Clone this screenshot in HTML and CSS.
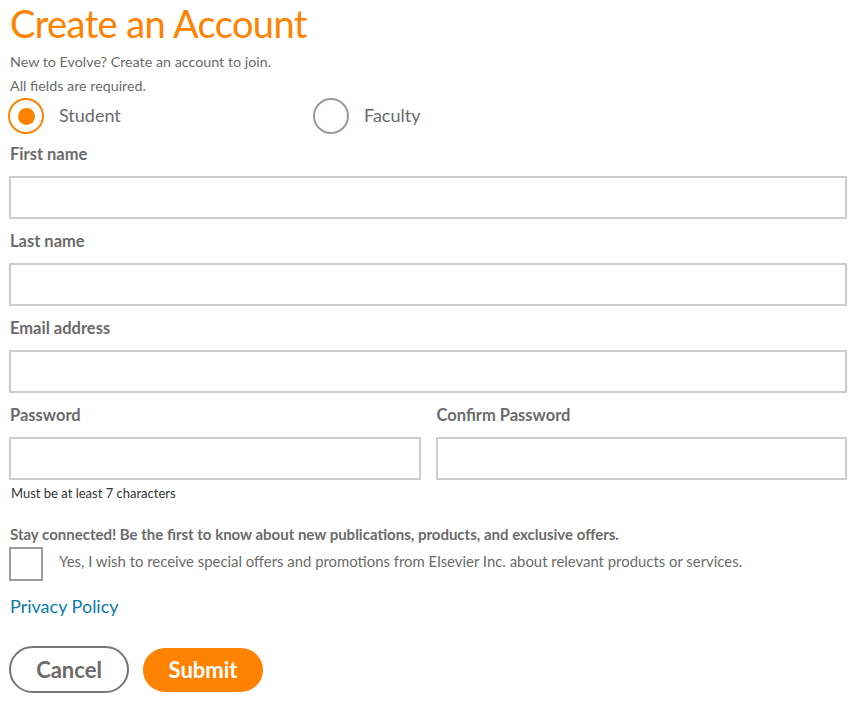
FILE: index.html
```html
<!DOCTYPE html>
<html lang="en">
<head>
<meta charset="utf-8">
<title>Create an Account</title>
<link rel="stylesheet" href="styles.css">
</head>
<body>
<main class="page">
  <h1 class="title">Create an Account</h1>
  <p class="intro">New to Evolve? Create an account to join.</p>
  <p class="intro">All fields are required.</p>
  <div class="roles">
    <label class="radio">
      <span class="radio-ring checked"><span class="radio-dot"></span></span>
      <span class="radio-text">Student</span>
    </label>
    <label class="radio">
      <span class="radio-ring"></span>
      <span class="radio-text">Faculty</span>
    </label>
  </div>
  <div class="field">
    <div class="label">First name</div>
    <div class="input"></div>
  </div>
  <div class="field">
    <div class="label">Last name</div>
    <div class="input"></div>
  </div>
  <div class="field">
    <div class="label">Email address</div>
    <div class="input"></div>
  </div>
  <div class="pw-row">
    <div class="field">
      <div class="label">Password</div>
      <div class="input"></div>
      <div class="hint">Must be at least 7 characters</div>
    </div>
    <div class="field">
      <div class="label">Confirm Password</div>
      <div class="input"></div>
    </div>
  </div>
  <p class="stay">Stay connected! Be the first to know about new publications, products, and exclusive offers.</p>
  <label class="check">
    <span class="box"></span>
    <span class="check-text">Yes, I wish to receive special offers and promotions from Elsevier Inc. about relevant products or services.</span>
  </label>
  <a class="privacy" href="#">Privacy Policy</a>
  <div class="actions">
    <button class="btn btn-cancel" type="button">Cancel</button>
    <button class="btn btn-submit" type="button">Submit</button>
  </div>
</main>
</body>
</html>
```

FILE: styles.css
```css
html, body {
  margin: 0;
  padding: 0;
  background: #ffffff;
}
body {
  font-family: Lato, "Open Sans", "Liberation Sans", sans-serif;
  color: #6b6b6b;
}
.page {
  padding: 0 8px 0 9px;
}
.title {
  margin: 0;
  font-size: 38px;
  font-weight: 400;
  letter-spacing: -0.6px;
  line-height: 46px;
  height: 50px;
  color: #ff8200;
  padding-left: 1px;
}
.intro {
  margin: 0;
  font-size: 14.3px;
  line-height: 24px;
  padding-left: 1px;
}
.roles {
  display: grid;
  grid-template-columns: 305px auto;
  margin-top: 0;
  height: 36px;
}
.radio {
  display: flex;
  align-items: center;
  gap: 15px;
}
.radio-ring {
  box-sizing: border-box;
  width: 36px;
  height: 36px;
  border-radius: 50%;
  border: 2px solid #9b9b9b;
  display: flex;
  align-items: center;
  justify-content: center;
  margin-left: -1px;
}
.radio-ring.checked {
  border-color: #ff8200;
}
.radio-dot {
  width: 17px;
  height: 17px;
  border-radius: 50%;
  background: #ff8200;
}
.radio-text {
  font-size: 18px;
  line-height: 22px;
  margin-top: -3px;
}
.field {
  display: flex;
  flex-direction: column;
}
.roles + .field {
  margin-top: 9px;
}
.field + .field,
.field + .pw-row {
  margin-top: 11px;
}
.label {
  font-size: 16.5px;
  font-weight: 700;
  line-height: 22px;
  height: 22px;
  margin-bottom: 11px;
  color: #6b6b6b;
  padding-left: 1px;
}
.input {
  box-sizing: border-box;
  height: 43px;
  border: 2px solid #cdcdcd;
  background: #fff;
}
.pw-row {
  display: grid;
  grid-template-columns: 1fr 1fr;
  gap: 15px;
}
.pw-row .field + .field {
  margin-top: 0;
}
.hint {
  margin-top: 5px;
  font-size: 13px;
  line-height: 16px;
  color: #333333;
  padding-left: 2px;
}
.stay {
  margin: 23px 0 0;
  font-size: 15px;
  font-weight: 700;
  line-height: 20px;
  padding-left: 1px;
}
.check {
  display: flex;
  align-items: center;
  gap: 16px;
  margin-top: 3px;
}
.box {
  box-sizing: border-box;
  flex: none;
  width: 34px;
  height: 34px;
  border: 2px solid #9b9b9b;
}
.check-text {
  font-size: 14.9px;
  line-height: 20px;
  margin-top: -6px;
}
.privacy {
  display: block;
  margin-top: 13px;
  font-size: 18px;
  line-height: 24px;
  color: #0a7ca6;
  text-decoration: none;
  padding-left: 1px;
  width: max-content;
}
.actions {
  display: flex;
  align-items: center;
  gap: 14px;
  margin-top: 28px;
}
.btn {
  font-family: Lato, "Open Sans", "Liberation Sans", sans-serif;
  font-size: 22px;
  font-weight: 700;
  border-radius: 24px;
  cursor: pointer;
  padding: 0;
}
.btn-cancel {
  box-sizing: border-box;
  width: 120px;
  height: 47px;
  background: #fff;
  border: 2px solid #757575;
  color: #6b6b6b;
}
.btn-submit {
  box-sizing: border-box;
  width: 120px;
  height: 44px;
  background: #ff8200;
  border: none;
  color: #fff;
}
```
